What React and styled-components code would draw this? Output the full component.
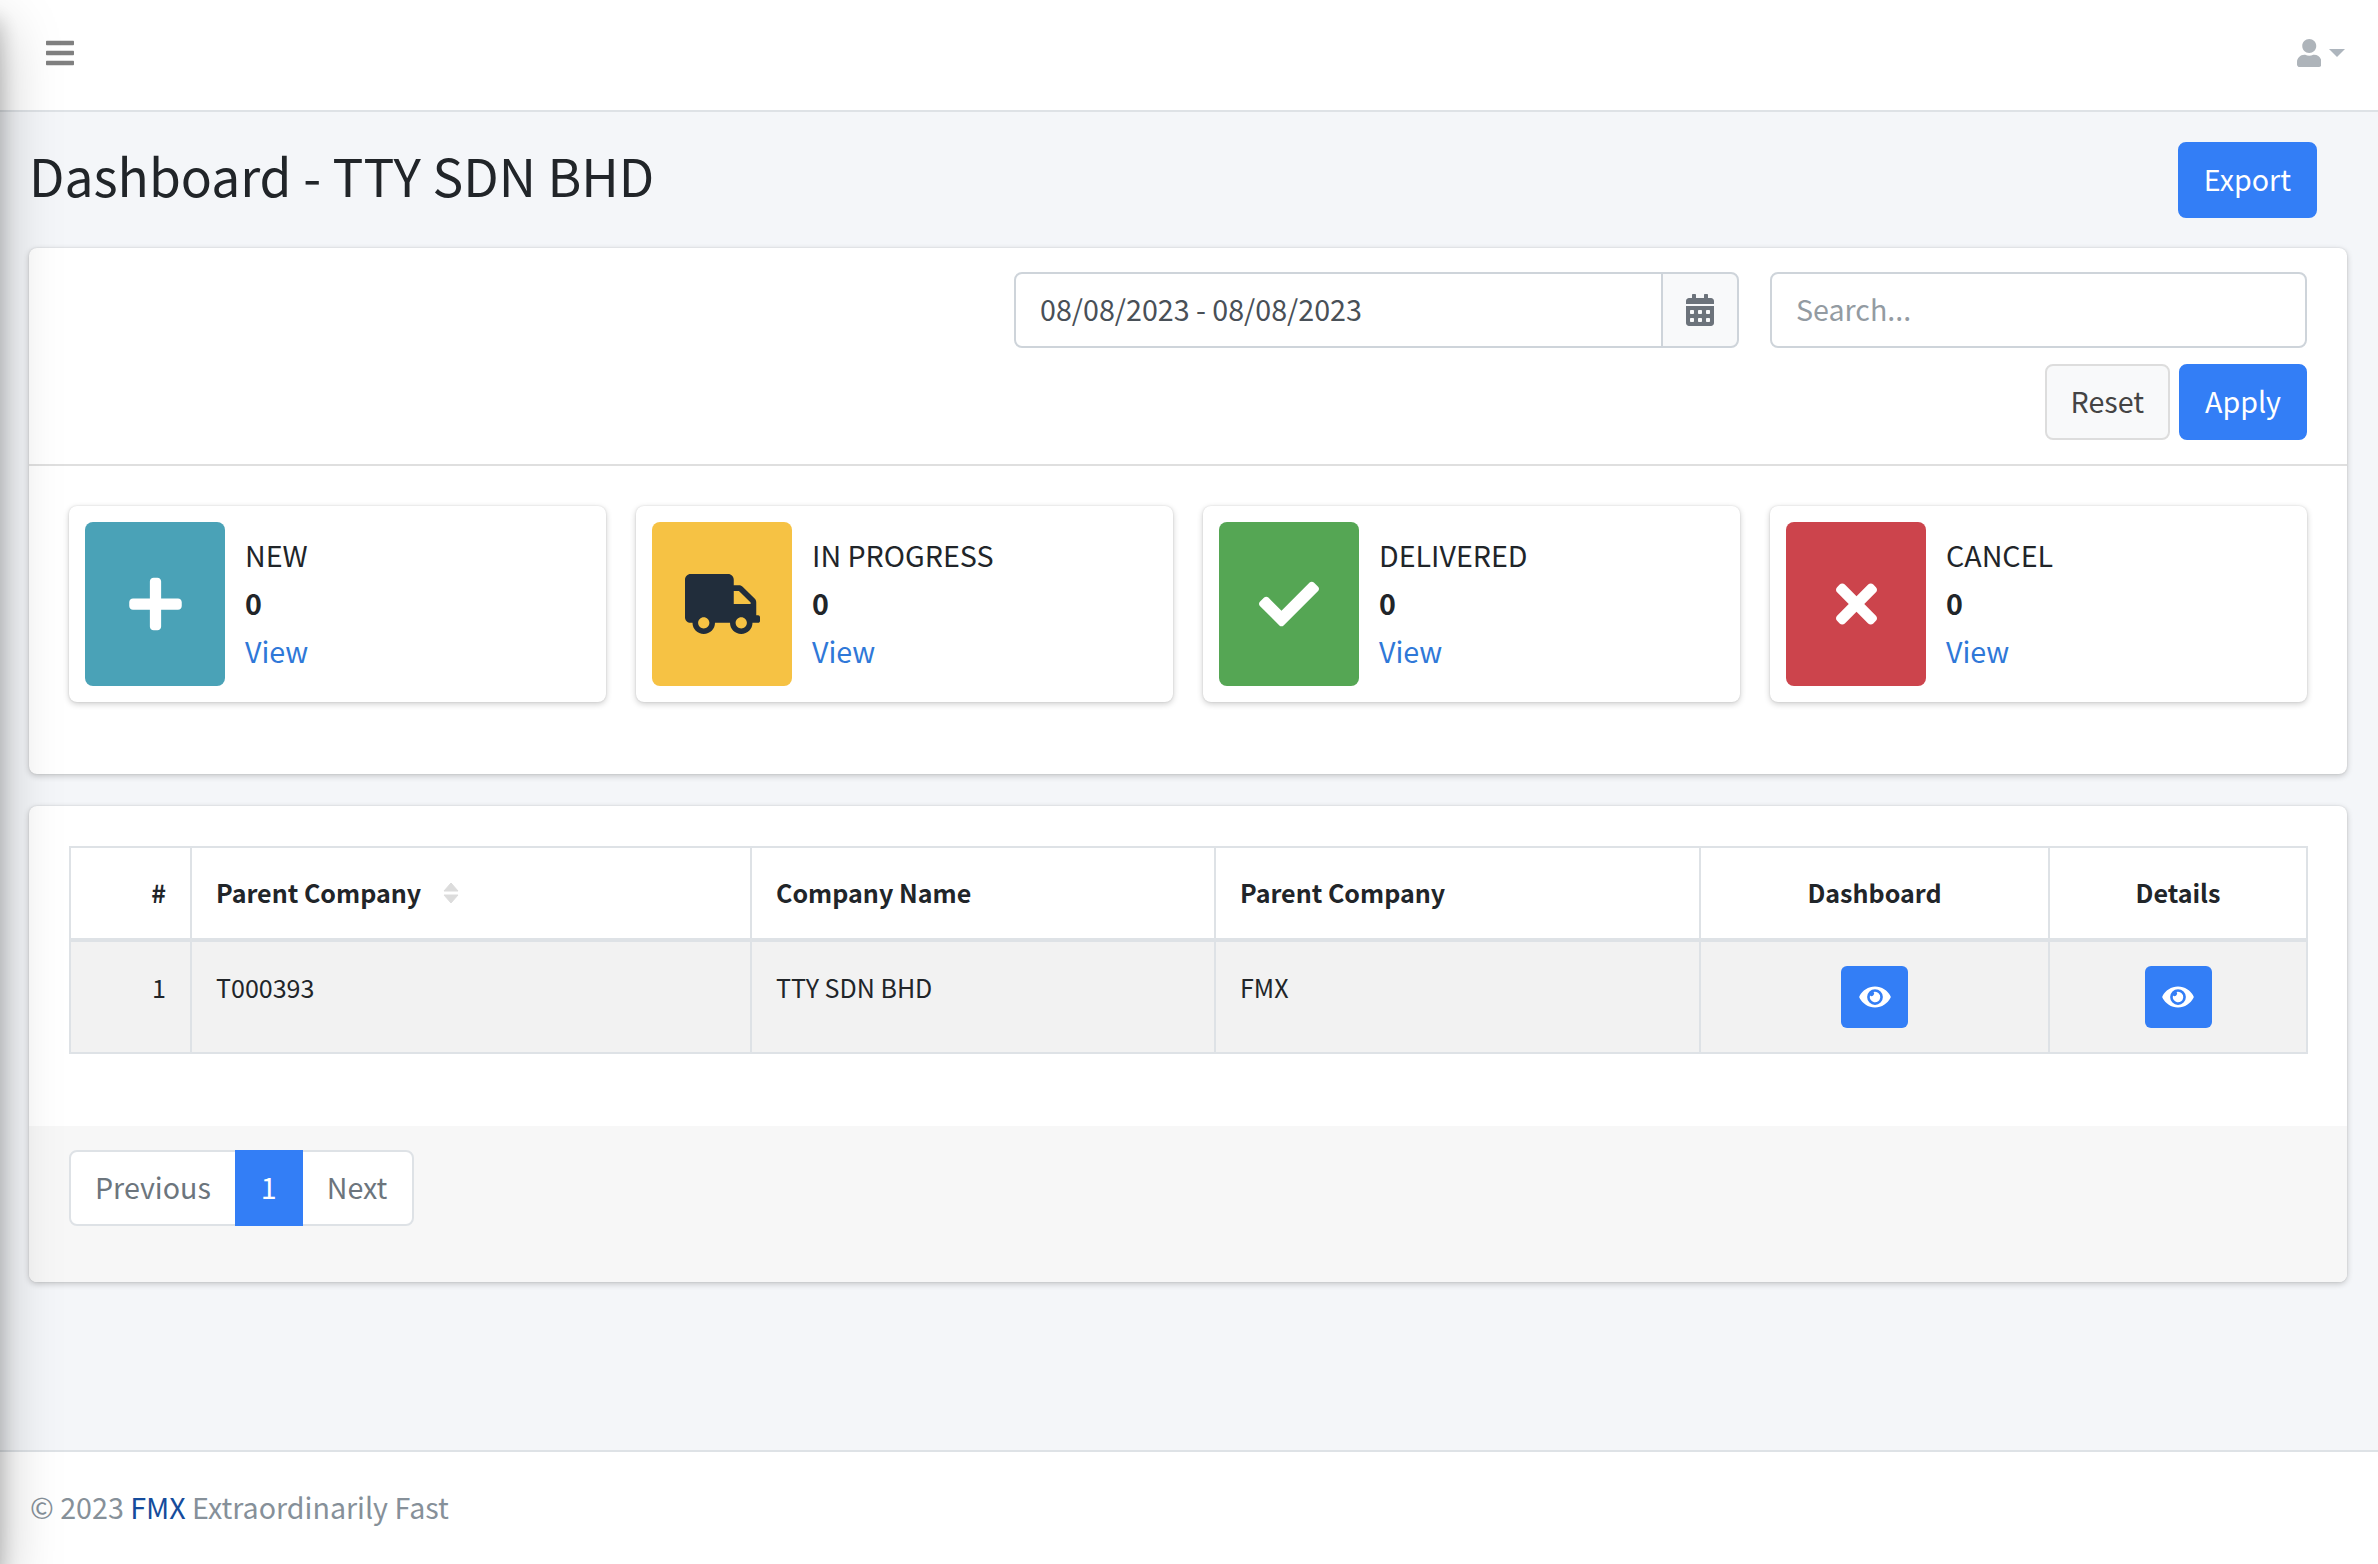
import styled, { createGlobalStyle } from "styled-components";
import {
  FaBars,
  FaUser,
  FaCalendarAlt,
  FaPlus,
  FaTruck,
  FaCheck,
  FaTimes,
  FaEye,
} from "react-icons/fa";

const blue = "#337ef6";
const cardShadow = "0 0 2px rgba(0, 0, 0, 0.125), 0 2px 6px rgba(0, 0, 0, 0.2)";

const GlobalStyle = createGlobalStyle`
  * {
    box-sizing: border-box;
  }
  html, body {
    margin: 0;
    padding: 0;
  }
  body {
    font-family: "Noto Sans CJK SC", "Noto Sans", sans-serif;
    font-size: 28.64px;
    line-height: 48px;
    color: #212529;
    background: #f4f6f9;
  }
`;

const Page = styled.div`
  min-height: 100vh;
  display: flex;
  flex-direction: column;
`;

const SidebarShadow = styled.div`
  position: fixed;
  top: 0;
  left: -500px;
  width: 500px;
  height: 100vh;
  box-shadow: 0 28px 56px rgba(0, 0, 0, 0.25), 0 20px 20px rgba(0, 0, 0, 0.22);
  z-index: 10;
`;

const Navbar = styled.nav`
  height: 112px;
  flex-shrink: 0;
  display: flex;
  align-items: center;
  justify-content: space-between;
  padding: 0 33px 4px 46px;
  background: #fff;
  border-bottom: 2px solid #dee2e6;
`;

const MenuIcon = styled(FaBars)`
  width: 28px;
  height: 32px;
  color: #808080;
`;

const UserMenu = styled.div`
  display: flex;
  align-items: center;
  gap: 8px;
  color: #aeb4ba;
`;

const UserIcon = styled(FaUser)`
  width: 24.5px;
  height: 28px;
`;

const Caret = styled.span`
  width: 0;
  height: 0;
  border-left: 8px solid transparent;
  border-right: 8px solid transparent;
  border-top: 8px solid #adb5bd;
`;

const Content = styled.main`
  flex: 1;
  padding: 0 31px 0 29px;
`;

const PageHeader = styled.div`
  display: flex;
  align-items: center;
  justify-content: space-between;
  padding: 30px 30px 30px 0;
`;

const Title = styled.h1`
  margin: 0 0 10px;
  font-size: 51.55px;
  line-height: 60px;
  font-weight: 400;
`;

const Button = styled.button`
  height: 76px;
  padding: 0 24px 2px;
  font-family: inherit;
  font-size: 28.64px;
  line-height: 48px;
  border-radius: 8px;
  border: 2px solid ${(p) => (p.$light ? "#ddd" : blue)};
  background: ${(p) => (p.$light ? "#f8f9fa" : blue)};
  color: ${(p) => (p.$light ? "#444" : "#fff")};
`;

const Card = styled.section`
  background: #fff;
  border-radius: 8px;
  box-shadow: ${cardShadow};
  margin-bottom: 32px;
  overflow: hidden;
`;

const CardHeader = styled.div`
  padding: 24px 40px;
  border-bottom: 2px solid #dfdfdf;
`;

const FilterRow = styled.div`
  display: flex;
  justify-content: flex-end;
  gap: 31px;
`;

const InputGroup = styled.div`
  display: flex;
  width: 725px;
  height: 76px;
`;

const Field = styled.input`
  min-width: 0;
  height: 76px;
  padding: 0 24px 3px;
  font-family: inherit;
  font-size: 28.64px;
  color: #495057;
  background: #fff;
  border: 2px solid #ced4da;
  border-radius: ${(p) => (p.$grouped ? "8px 0 0 8px" : "8px")};
  width: ${(p) => (p.$grouped ? "auto" : "537px")};
  flex: ${(p) => (p.$grouped ? "1" : "none")};

  &::placeholder {
    color: #939ba2;
    opacity: 1;
  }
`;

const Addon = styled.div`
  width: 78px;
  margin-left: -2px;
  display: flex;
  align-items: center;
  justify-content: center;
  background: #f8f9fa;
  border: 2px solid #ced4da;
  border-radius: 0 8px 8px 0;
`;

const CalendarIcon = styled(FaCalendarAlt)`
  width: 28px;
  height: 32px;
  color: #6c737b;
`;

const ButtonRow = styled.div`
  display: flex;
  justify-content: flex-end;
  gap: 9px;
  margin-top: 16px;
`;

const CardBody = styled.div`
  padding: 40px;
`;

const StatGrid = styled.div`
  display: grid;
  grid-template-columns: repeat(4, 537px);
  gap: 30px;
  margin-bottom: 32px;
`;

const StatCard = styled.div`
  display: flex;
  height: 196px;
  padding: 16px;
  background: #fff;
  border-radius: 8px;
  box-shadow: ${cardShadow};
`;

const StatIcon = styled.div`
  width: 140px;
  height: 164px;
  flex-shrink: 0;
  display: flex;
  align-items: center;
  justify-content: center;
  border-radius: 8px;
  background: ${(p) => p.$bg};
  color: ${(p) => p.$fg};

  svg {
    width: ${(p) => p.$iconWidth}px;
    height: 60px;
  }
`;

const StatText = styled.div`
  padding: 9px 20px;
  display: flex;
  flex-direction: column;
`;

const StatLabel = styled.span`
  color: #212529;
`;

const StatValue = styled.b`
  font-weight: 700;
`;

const ViewLink = styled.a`
  color: #2f78d8;
  text-decoration: none;
`;

const Table = styled.table`
  width: 2237px;
  table-layout: fixed;
  border-collapse: collapse;
  margin-bottom: 32px;
  font-size: 25.06px;
  line-height: 42px;
`;

const HeadCell = styled.th`
  padding: 23px 24px 25px;
  font-weight: 700;
  text-align: ${(p) => p.$align || "left"};
  border: 2px solid #dee2e6;
  border-bottom-width: 4px;
  background: #fff;
`;

const BodyRow = styled.tr`
  background: #f2f2f2;
`;

const Cell = styled.td`
  padding: 24px;
  vertical-align: top;
  text-align: ${(p) => p.$align || "left"};
  border: 2px solid #dee2e6;
`;

const SortIcon = styled.svg`
  width: 18px;
  height: 22px;
  margin-left: 21px;
  vertical-align: -1px;
`;

const EyeButton = styled.button`
  display: inline-flex;
  align-items: center;
  justify-content: center;
  width: 67px;
  height: 62px;
  padding: 0;
  border: none;
  border-radius: 6px;
  background: ${blue};
  color: #fff;

  svg {
    width: 32px;
    height: 28px;
  }
`;

const CardFooter = styled.div`
  padding: 24px 40px 56px;
  background: #f7f7f7;
`;

const Pagination = styled.div`
  display: inline-flex;
`;

const PageItem = styled.a`
  height: 76px;
  padding: 11px ${(p) => (p.$last ? "25px" : "24px")} 13px 24px;
  margin-left: ${(p) => (p.$first ? "0" : "-2px")};
  color: ${(p) => (p.$active ? "#fff" : "#6c757d")};
  background: ${(p) => (p.$active ? blue : "#fff")};
  border: 2px solid ${(p) => (p.$active ? blue : "#dee2e6")};
  border-radius: ${(p) =>
    p.$first ? "8px 0 0 8px" : p.$last ? "0 8px 8px 0" : "0"};
  position: ${(p) => (p.$active ? "relative" : "static")};
`;

const Footer = styled.footer`
  flex-shrink: 0;
  height: 114px;
  padding: 31px 30px;
  background: #fff;
  border-top: 2px solid #dee2e6;
  color: #869099;
`;

const FooterLink = styled.a`
  color: #154c9c;
  text-decoration: none;
`;

const stats = [
  { label: "NEW", bg: "#4aa2b7", fg: "#fff", width: 53, icon: <FaPlus /> },
  { label: "IN PROGRESS", bg: "#f6c244", fg: "#212d3b", width: 75, icon: <FaTruck /> },
  { label: "DELIVERED", bg: "#55a654", fg: "#fff", width: 60, icon: <FaCheck /> },
  { label: "CANCEL", bg: "#cc444c", fg: "#fff", width: 41, icon: <FaTimes /> },
];

const columnWidths = [121, 560, 464, 485, 349, 258];

export default function App() {
  return (
    <Page>
      <GlobalStyle />
      <SidebarShadow />
      <Navbar>
        <MenuIcon />
        <UserMenu>
          <UserIcon />
          <Caret />
        </UserMenu>
      </Navbar>

      <Content>
        <PageHeader>
          <Title>Dashboard - TTY SDN BHD</Title>
          <Button>Export</Button>
        </PageHeader>

        <Card>
          <CardHeader>
            <FilterRow>
              <InputGroup>
                <Field $grouped defaultValue="08/08/2023 - 08/08/2023" />
                <Addon>
                  <CalendarIcon />
                </Addon>
              </InputGroup>
              <Field placeholder="Search..." />
            </FilterRow>
            <ButtonRow>
              <Button $light>Reset</Button>
              <Button>Apply</Button>
            </ButtonRow>
          </CardHeader>
          <CardBody>
            <StatGrid>
              {stats.map((stat) => (
                <StatCard key={stat.label}>
                  <StatIcon $bg={stat.bg} $fg={stat.fg} $iconWidth={stat.width}>
                    {stat.icon}
                  </StatIcon>
                  <StatText>
                    <StatLabel>{stat.label}</StatLabel>
                    <StatValue>0</StatValue>
                    <ViewLink href="#">View</ViewLink>
                  </StatText>
                </StatCard>
              ))}
            </StatGrid>
          </CardBody>
        </Card>

        <Card>
          <CardBody>
            <Table>
              <colgroup>
                {columnWidths.map((width, i) => (
                  <col key={i} width={width} />
                ))}
              </colgroup>
              <thead>
                <tr>
                  <HeadCell $align="right">#</HeadCell>
                  <HeadCell>
                    Parent Company
                    <SortIcon viewBox="0 0 18 22">
                      <path d="M9 1 16 9H2Z" fill="#dcdcdc" stroke="#dcdcdc" strokeLinejoin="round" />
                      <path d="M9 21 16 13H2Z" fill="#dcdcdc" stroke="#dcdcdc" strokeLinejoin="round" />
                    </SortIcon>
                  </HeadCell>
                  <HeadCell>Company Name</HeadCell>
                  <HeadCell>Parent Company</HeadCell>
                  <HeadCell $align="center">Dashboard</HeadCell>
                  <HeadCell $align="center">Details</HeadCell>
                </tr>
              </thead>
              <tbody>
                <BodyRow>
                  <Cell $align="right">1</Cell>
                  <Cell>T000393</Cell>
                  <Cell>TTY SDN BHD</Cell>
                  <Cell>FMX</Cell>
                  <Cell $align="center">
                    <EyeButton>
                      <FaEye />
                    </EyeButton>
                  </Cell>
                  <Cell $align="center">
                    <EyeButton>
                      <FaEye />
                    </EyeButton>
                  </Cell>
                </BodyRow>
              </tbody>
            </Table>
          </CardBody>
          <CardFooter>
            <Pagination>
              <PageItem $first>Previous</PageItem>
              <PageItem $active>1</PageItem>
              <PageItem $last>Next</PageItem>
            </Pagination>
          </CardFooter>
        </Card>
      </Content>

      <Footer>
        © 2023 <FooterLink href="#">FMX</FooterLink> Extraordinarily Fast
      </Footer>
    </Page>
  );
}
